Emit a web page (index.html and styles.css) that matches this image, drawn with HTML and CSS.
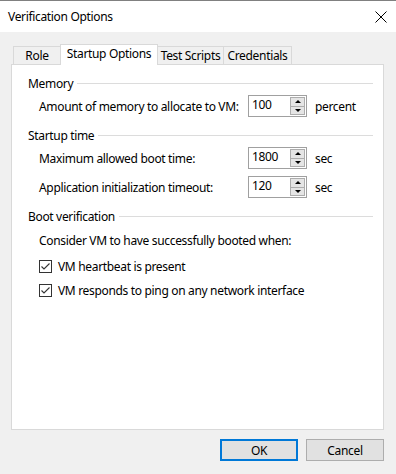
FILE: index.html
```html
<!DOCTYPE html>
<html>
<head>
<meta charset="utf-8">
<link rel="stylesheet" href="styles.css">
</head>
<body>
<div class="window">
  <div class="titlebar">
    <span class="title">Verification Options</span>
    <svg class="close" width="12" height="12" viewBox="0 0 12 12"><path d="M0.5 0.5 L11.5 11.5 M11.5 0.5 L0.5 11.5" stroke="#000" stroke-width="1" fill="none"/></svg>
  </div>
  <div class="client">
    <div class="tabs">
      <div class="tab t-role">Role</div>
      <div class="tab selected t-startup">Startup Options</div>
      <div class="tab t-scripts">Test Scripts</div>
      <div class="tab t-cred">Credentials</div>
    </div>
    <div class="panel">
      <div class="group-head"><span>Memory</span><div class="rule"></div></div>
      <div class="row row-mem">
        <span class="label">Amount of memory to allocate to VM:</span>
        <div class="spin"><span class="val">100</span><div class="btns"><div class="sb up"><i></i></div><div class="sb down"><i></i></div></div></div>
        <span class="unit">percent</span>
      </div>
      <div class="group-head g2"><span>Startup time</span><div class="rule"></div></div>
      <div class="row row-boot">
        <span class="label">Maximum allowed boot time:</span>
        <div class="spin"><span class="val">1800</span><div class="btns"><div class="sb up"><i></i></div><div class="sb down"><i></i></div></div></div>
        <span class="unit">sec</span>
      </div>
      <div class="row row-app">
        <span class="label">Application initialization timeout:</span>
        <div class="spin"><span class="val">120</span><div class="btns"><div class="sb up"><i></i></div><div class="sb down"><i></i></div></div></div>
        <span class="unit">sec</span>
      </div>
      <div class="group-head g3"><span>Boot verification</span><div class="rule"></div></div>
      <div class="text-row">Consider VM to have successfully booted when:</div>
      <div class="check-row c1">
        <span class="cb"><svg width="11" height="11" viewBox="0 0 11 11"><path d="M1.5 5.5 L4 8 L9.5 2.5" stroke="#333" stroke-width="1.1" fill="none"/></svg></span>
        <span>VM heartbeat is present</span>
      </div>
      <div class="check-row c2">
        <span class="cb"><svg width="11" height="11" viewBox="0 0 11 11"><path d="M1.5 5.5 L4 8 L9.5 2.5" stroke="#333" stroke-width="1.1" fill="none"/></svg></span>
        <span>VM responds to ping on any network interface</span>
      </div>
    </div>
    <div class="buttons">
      <div class="btn default">OK</div>
      <div class="btn">Cancel</div>
    </div>
  </div>
</div>
</body>
</html>
```
FILE: styles.css
```css
* { box-sizing: border-box; }
html, body { margin: 0; padding: 0; }
body {
  width: 396px;
  height: 474px;
  background: #f0f0f0;
  font-family: "Noto Sans", "Open Sans", sans-serif;
  font-size: 12px;
  letter-spacing: -0.33px;
  color: #000;
  overflow: hidden;
  white-space: nowrap;
}
.window {
  height: 474px;
  display: flex;
  flex-direction: column;
}
.titlebar {
  height: 32px;
  flex: none;
  background: #fff;
  border-top: 1px solid #808080;
  display: flex;
  align-items: center;
  justify-content: space-between;
  padding: 0 9px 0 8px;
}
.title { font-size: 12px; }
.close { display: block; }
.client {
  flex: 1;
  display: flex;
  flex-direction: column;
  padding: 12px 12px 13px 11px;
}
.tabs {
  display: flex;
  align-items: flex-end;
  height: 20px;
  padding-left: 2px;
  flex: none;
}
.tab {
  height: 18px;
  border: 1px solid #d9d9d9;
  border-bottom: none;
  background: #f0f0f0;
  display: flex;
  align-items: center;
  justify-content: center;
  line-height: 1;
  padding-top: 1px;
}
.tab.selected {
  height: 21px;
  margin-bottom: -1px;
  background: #fff;
  position: relative;
  z-index: 1;
  padding-top: 0;
  padding-bottom: 3px;
}
.t-role { width: 47px; border-right: none; }
.t-startup { width: 98px; }
.t-scripts { width: 66px; border-left: none; }
.t-cred { width: 68px; border-left: none; }
.panel {
  flex: 1;
  background: #fff;
  border: 1px solid #d9d9d9;
  padding: 10px 10px 0 16px;
  display: flex;
  flex-direction: column;
}
.group-head {
  height: 16px;
  display: flex;
  align-items: center;
  gap: 4px;
}
.group-head .rule {
  flex: 1;
  height: 1px;
  background: #dcdcdc;
  margin-top: 1px;
}
.row {
  display: flex;
  align-items: center;
  padding-left: 11px;
  height: 22px;
}
.row-mem { margin-top: 4px; }
.g2 { margin-top: 10px; }
.row-boot { margin-top: 4px; }
.row-app { margin-top: 7px; }
.g3 { margin-top: 10px; }
.label { width: 209px; flex: none; }
.spin {
  width: 59px;
  height: 22px;
  border: 1px solid #a0a0a0;
  display: flex;
  justify-content: space-between;
  background: #fff;
}
.val { padding-left: 3px; line-height: 18px; }
.btns {
  width: 16px;
  display: flex;
  flex-direction: column;
  padding: 1px 1px 1px 0;
}
.sb {
  flex: 1;
  background: #e5e5e5;
  border: 1px solid #adadad;
  display: flex;
  align-items: center;
  justify-content: center;
}
.sb.down { border-top: none; }
.sb i {
  display: block;
  width: 0;
  height: 0;
  border-left: 3px solid transparent;
  border-right: 3px solid transparent;
}
.up i { border-bottom: 3px solid #000; }
.down i { border-top: 3px solid #000; }
.unit { margin-left: 8px; }
.text-row {
  padding-left: 11px;
  height: 16px;
  line-height: 16px;
  margin-top: 9px;
}
.check-row {
  display: flex;
  align-items: center;
  padding-left: 11px;
  height: 16px;
  gap: 6px;
}
.c1 { margin-top: 9px; }
.c2 { margin-top: 8px; }
.cb {
  width: 13px;
  height: 13px;
  border: 1px solid #333;
  background: #fff;
  display: flex;
  align-items: center;
  justify-content: center;
}
.cb svg { display: block; }
.buttons {
  flex: none;
  display: flex;
  justify-content: flex-end;
  gap: 8px;
  margin-top: 9px;
}
.btn {
  width: 78px;
  height: 22px;
  background: #e1e1e1;
  border: 1px solid #adadad;
  display: flex;
  align-items: center;
  justify-content: center;
}
.btn.default { border: 2px solid #0078d7; }
```
